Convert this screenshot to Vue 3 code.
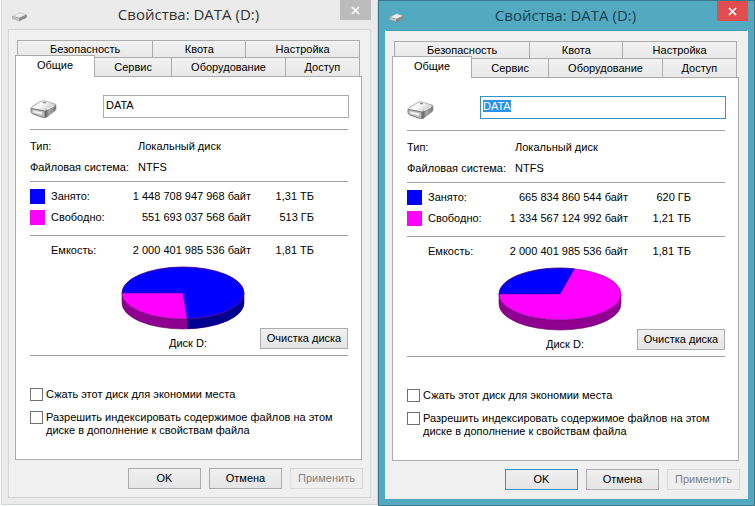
<script setup>
import { onMounted } from 'vue'

const tabsBack = [
  { label: 'Безопасность', cls: 'w-security' },
  { label: 'Квота', cls: 'w-quota' },
  { label: 'Настройка', cls: 'w-custom' }
]
const tabsFront = [
  { label: 'Общие', cls: 'w-general', active: true },
  { label: 'Сервис', cls: 'w-service' },
  { label: 'Оборудование', cls: 'w-hardware' },
  { label: 'Доступ', cls: 'w-sharing' }
]

const RX = 61
const RY = 26
const CX = 62
const CY = 27
const DEPTH = 10

// Point on the ellipse seen at a clockwise angle that starts on the left side.
function rim(share) {
  const a = Math.PI + share * 2 * Math.PI
  const c = Math.cos(a)
  const s = Math.sin(a)
  const r = 1 / Math.sqrt((c * c) / (RX * RX) + (s * s) / (RY * RY))
  return { x: CX + r * c, y: CY + r * s }
}

function pie(share) {
  const p = rim(share)
  const large = share > 0.5 ? 1 : 0
  return {
    wedge: `M${CX} ${CY}L${CX - RX} ${CY}A${RX} ${RY} 0 ${large} 1 ${p.x} ${p.y}Z`,
    side: `M${CX - RX} ${CY}A${RX} ${RY} 0 0 0 ${CX + RX} ${CY}v${DEPTH}A${RX} ${RY} 0 0 1 ${CX - RX} ${CY + DEPTH}Z`,
    usedSide: share > 0.5
      ? `M${p.x} ${p.y}A${RX} ${RY} 0 0 0 ${CX + RX} ${CY}v${DEPTH}A${RX} ${RY} 0 0 1 ${p.x} ${p.y + DEPTH}Z`
      : ''
  }
}

const windows = [
  {
    id: 'before', active: false,
    used: ['1 448 708 947 968 байт', '1,31 ТБ'],
    free: ['551 693 037 568 байт', '513 ГБ'],
    pie: pie(1448708947968 / 2000401985536)
  },
  {
    id: 'after', active: true,
    used: ['665 834 860 544 байт', '620 ГБ'],
    free: ['1 334 567 124 992 байт', '1,21 ТБ'],
    pie: pie(665834860544 / 2000401985536)
  }
]

onMounted(() => {
  const field = document.getElementById('name-after')
  field.focus()
  field.select()
})
</script>

<template>
  <main class="desktop">
    <section v-for="w in windows" :key="w.id" class="window" :class="{ active: w.active }">
      <header class="titlebar">
        <svg class="title-icon" viewBox="0 0 28 20" aria-hidden="true">
          <path d="M1 10 14 3 27 7 14 13Z" fill="#ededed" stroke="#b3b3b3" />
          <path d="M1 10 14 13v5L1 14Z" fill="#c8c8c8" stroke="#959595" />
          <path d="M14 13 27 7v5L14 18Z" fill="#8c8c8c" stroke="#808080" />
        </svg>
        <h1>Свойства: DATA (D:)</h1>
        <button class="close" type="button" aria-label="Закрыть">
          <svg viewBox="0 0 9 9"><path d="M1 1l7 7M8 1l-7 7" stroke="#fff" stroke-width="1.700" /></svg>
        </button>
      </header>

      <div class="client">
        <div class="tabs">
          <div class="tab-row back">
            <button v-for="t in tabsBack" :key="t.label" type="button" class="tab" :class="t.cls">{{ t.label }}</button>
          </div>
          <div class="tab-row front">
            <button v-for="t in tabsFront" :key="t.label" type="button" class="tab" :class="[t.cls, { current: t.active }]">{{ t.label }}</button>
          </div>
        </div>

        <div class="panel">
          <div class="name-row">
            <svg class="drive" viewBox="0 0 28 20" aria-hidden="true">
              <defs>
                <linearGradient :id="'top-' + w.id" x1="0" y1="0" x2="1" y2="0.500">
                  <stop offset="0" stop-color="#d2d2d2" /><stop offset="0.500" stop-color="#fbfbfb" /><stop offset="1" stop-color="#c6c6c6" />
                </linearGradient>
                <linearGradient :id="'right-' + w.id" x1="0" y1="0" x2="1" y2="0">
                  <stop offset="0" stop-color="#555" /><stop offset="0.400" stop-color="#a9a9a9" /><stop offset="1" stop-color="#777" />
                </linearGradient>
              </defs>
              <path d="M1 9.500Q0.500 8.500 2 7.500L11 2.300Q13 1.500 15 2L25 5Q26.500 5.500 26 6.500L15.500 11.500Q14.500 12 13 11.700Z" :fill="`url(#top-${w.id})`" stroke="#a0a0a0" stroke-width="0.800" />
              <path d="M1 9.500 13 11.700Q15 12 15 13V18.500L12 18.200 2.500 14.800Q1 14 1 12.500Z" fill="#b9bbb9" stroke="#747474" stroke-width="0.900" />
              <path d="M3 11.200 12 13.300V16L3.500 13.500Z" fill="#eceeec" />
              <path d="M15 12 26 6.300V10Q26 11 25 11.700L17 18Q16 18.700 15 18.500Z" :fill="`url(#right-${w.id})`" stroke="#888" stroke-width="0.600" />
              <path d="M5 8 13 3.700M17 10.500 24 7" stroke="#fff" stroke-width="0.900" fill="none" />
              <path d="M13 3.700h3" stroke="#666" />
            </svg>
            <input :id="'name-' + w.id" class="name" type="text" value="DATA" aria-label="Метка тома">
          </div>

          <dl class="facts">
            <dt>Тип:</dt><dd>Локальный диск</dd>
            <dt>Файловая система:</dt><dd>NTFS</dd>
          </dl>

          <table class="usage">
            <colgroup><col class="c-key"><col><col class="c-bytes"><col class="c-size"><col class="c-rest"></colgroup>
            <tbody>
              <tr><td><i class="swatch used"></i></td><th scope="row">Занято:</th><td class="num">{{ w.used[0] }}</td><td class="num">{{ w.used[1] }}</td><td></td></tr>
              <tr><td><i class="swatch free"></i></td><th scope="row">Свободно:</th><td class="num">{{ w.free[0] }}</td><td class="num">{{ w.free[1] }}</td><td></td></tr>
            </tbody>
            <tfoot>
              <tr><td></td><th scope="row">Емкость:</th><td class="num">2 000 401 985 536 байт</td><td class="num">1,81 ТБ</td><td></td></tr>
            </tfoot>
          </table>

          <div class="chart">
            <svg class="pie" viewBox="0 0 124 62" aria-hidden="true">
              <path :d="w.pie.side" fill="#900090" stroke="#60105c" stroke-width="0.600" />
              <path v-if="w.pie.usedSide" :d="w.pie.usedSide" fill="#000090" />
              <ellipse :cx="CX" :cy="CY" :rx="RX" :ry="RY" fill="#f0f" />
              <path :d="w.pie.wedge" fill="#00f" stroke="#30107c" stroke-width="0.500" />
              <ellipse :cx="CX" :cy="CY" :rx="RX" :ry="RY" fill="none" stroke="#50106c" stroke-width="0.500" />
            </svg>
            <span class="caption">Диск D:</span>
            <button class="btn clean" type="button">Очистка диска</button>
          </div>

          <div class="options">
            <label><input type="checkbox"><span>Сжать этот диск для экономии места</span></label>
            <label><input type="checkbox"><span>Разрешить индексировать содержимое файлов на этом диске в дополнение к свойствам файла</span></label>
          </div>
        </div>

        <footer class="actions">
          <button class="btn" :class="{ default: w.active }" type="button">OK</button>
          <button class="btn" type="button">Отмена</button>
          <button class="btn" type="button" disabled>Применить</button>
        </footer>
      </div>
    </section>
  </main>
</template>

<style>
body { margin: 0; background: #fff; }
</style>

<style scoped>
* { box-sizing: border-box; }
.desktop {
  display: grid;
  grid-template-columns: 1fr 1fr;
  align-items: start;
  padding-left: 1px;
  font: 11px/13px "Liberation Sans", Arial, sans-serif;
  color: #000;
}
button, input { font: inherit; color: inherit; margin: 0; }
.window {
  background: #ebebeb;
  border: 1px solid #cfd6d4;
  border-top: 0;
  padding: 0 6px 6px;
}
.window.active { background: #52a9c0; border: 1px solid #37798b; }
.titlebar { display: flex; align-items: flex-start; height: 29px; }
.title-icon { width: 15px; height: 11px; margin: 11px 0 0 4px; }
h1 {
  flex: 1;
  margin: 2px 0 0;
  padding-left: 10px;
  text-align: center;
  font: 400 15px/24px "Open Sans", "Noto Sans", sans-serif;
  color: #333;
}
.active h1 { color: #17424f; }
.close {
  display: flex; align-items: center; justify-content: center;
  width: 31px; height: 20px; padding: 0; border: 0;
  background: #bcbcbc;
}
.active .close { background: #e04e50; }
.close svg { width: 9px; height: 9px; }
.client { border: 1px solid #d3d6d3; background: #f0f0f0; padding: 10px 8px 8px 6px; }
.active .client { border-color: #4a9db3 #e6f0f2 #e6f0f2; }
.tabs { padding: 0 2px; }
.tab-row { display: flex; }
.tab {
  padding: 0;
  border: 1px solid #acacac; border-left-width: 0; border-bottom-width: 0;
  background: linear-gradient(#f2f2f2, #e8e8e8);
}
.tab:first-child { border-left-width: 1px; }
.back .tab { height: 17px; }
.front .tab { height: 19px; }
.w-security { flex: 136; }
.w-quota { flex: 93; }
.w-custom { flex: 114; }
.w-general { flex: 79; }
.w-service { flex: 77; }
.w-hardware { flex: 114; }
.w-sharing { flex: 74; }
.front .current {
  position: relative; z-index: 1;
  height: 22px; margin: -2px 0 -1px -2px; padding-bottom: 2px;
  background: #fff;
}
.panel { border: 1px solid #acacac; background: #fff; padding: 18px 13px 22px 14px; }
.name-row { display: flex; justify-content: space-between; border-bottom: 1px solid #a0a0a0; padding-bottom: 10px; }
.drive { width: 28px; height: 20px; margin-top: 4px; }
.name {
  width: 246px; height: 23px; margin-right: -1px; padding: 0 2px 3px;
  border: 1px solid #ababab; border-radius: 0; background: #fff; outline: 0;
}
.active .name { border-color: #3294c4; }
.name::selection { background: #2c92ee; color: #fff; }
.facts {
  display: grid; grid-template-columns: 108px 1fr;
  margin: 0; padding: 6px 0 3px; line-height: 21px;
  border-bottom: 1px solid #a0a0a0;
}
.facts dt { white-space: nowrap; }
.facts dd { margin: 0; }
.usage { width: 100%; margin-top: 4px; border-collapse: collapse; table-layout: fixed; }
.c-key { width: 21px; }
.c-bytes { width: 130px; }
.c-size { width: 63px; }
.c-rest { width: 34px; }
.usage td, .usage th { height: 21px; padding: 0; font-weight: 400; text-align: left; white-space: nowrap; }
.usage tbody tr:last-child > * { height: 28px; padding-bottom: 7px; }
.usage tfoot tr > * { height: 31px; border-top: 1px solid #a0a0a0; }
.usage .num { text-align: right; }
.swatch { display: block; width: 15px; height: 15px; }
.swatch.used { background: #00f; }
.swatch.free { background: #f0f; }
.chart {
  display: grid; grid-template-columns: 86px 1fr 88px; grid-template-rows: 62px 21px;
  align-items: center; padding-bottom: 6px; border-bottom: 1px solid #a0a0a0;
}
.pie { grid-area: 1 / 2; justify-self: center; width: 124px; height: 62px; margin-right: 11px; overflow: visible; }
.caption { grid-area: 2 / 2; text-align: center; padding-top: 10px; }
.clean { grid-area: 2 / 3; }
.btn {
  height: 21px; padding: 0; white-space: nowrap;
  border: 1px solid #acacac; background: linear-gradient(#f0f0f0, #e5e5e5);
}
.btn.default { border-color: #3294c4; }
.btn:disabled { color: #838383; border-color: #d9d9d9; background: #efefef; }
.options { display: flex; flex-direction: column; gap: 10px; padding-top: 32px; }
.options label { display: flex; gap: 3px; }
.options input {
  appearance: none; flex: none; width: 13px; height: 13px;
  border: 1px solid #707070; background: #fff;
}
.actions { display: flex; justify-content: flex-end; gap: 8px; padding-top: 8px; margin-right: -1px; }
.actions .btn { width: 73px; }
</style>
